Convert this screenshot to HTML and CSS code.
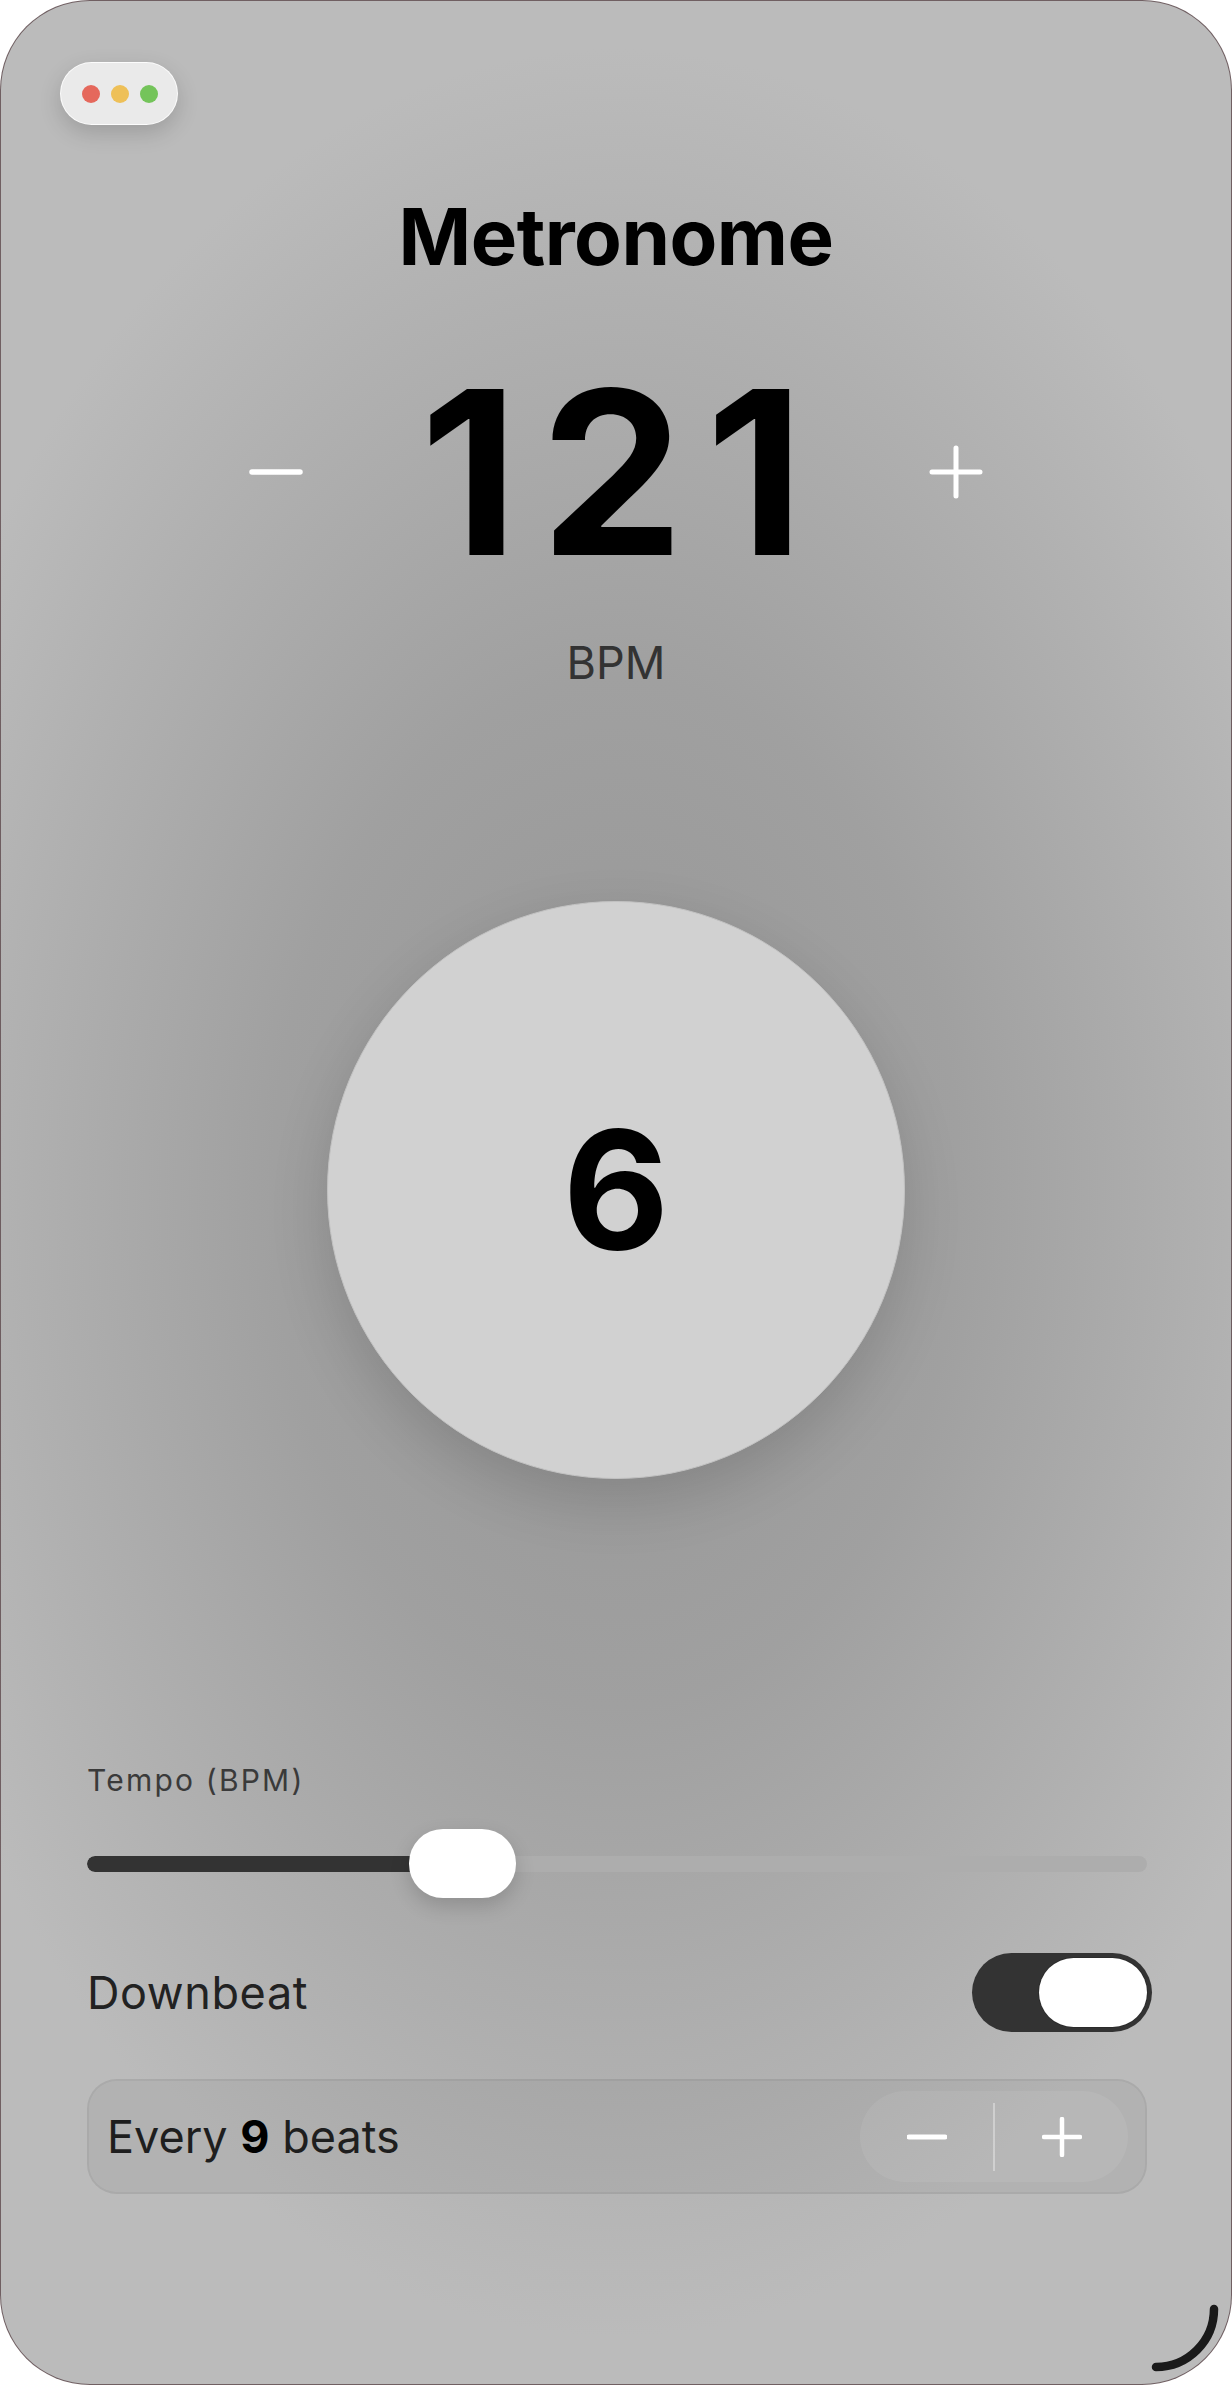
FILE: index.html
```html
<!DOCTYPE html>
<html lang="en">
<head>
<meta charset="utf-8">
<title>Metronome</title>
<link rel="stylesheet" href="styles.css">
</head>
<body>
<div class="window">
  <div class="traffic">
    <span class="dot red"></span>
    <span class="dot yellow"></span>
    <span class="dot green"></span>
  </div>

  <h1 class="title">Metronome</h1>

  <div class="bpm-row">
    <button class="icon-btn" aria-label="Decrease tempo">
      <svg width="54" height="54" viewBox="0 0 54 54"><path d="M3 27H51" stroke="#fff" stroke-width="5.5" stroke-linecap="round"/></svg>
    </button>
    <div class="bpm-value">121</div>
    <button class="icon-btn" aria-label="Increase tempo">
      <svg width="54" height="54" viewBox="0 0 54 54"><path d="M3 27H51M27 3V51" stroke="#fff" stroke-width="5" stroke-linecap="round"/></svg>
    </button>
  </div>
  <div class="bpm-label">BPM</div>

  <div class="beat-circle"><span class="beat-num">6</span></div>

  <div class="controls">
    <div class="slider-label">Tempo (BPM)</div>
    <div class="slider">
      <div class="track">
        <div class="fill" style="width: 35.5%"></div>
      </div>
      <div class="thumb" style="left: 30.4%"></div>
    </div>

    <div class="row">
      <span class="row-label">Downbeat</span>
      <div class="toggle on"><span class="knob"></span></div>
    </div>

    <div class="every-box">
      <span class="every-text">Every <b>9</b> beats</span>
      <div class="stepper">
        <button class="step" aria-label="Fewer beats">
          <svg width="40" height="40" viewBox="0 0 40 40"><path d="M2 20H38" stroke="#fff" stroke-width="5" stroke-linecap="round"/></svg>
        </button>
        <span class="divider"></span>
        <button class="step" aria-label="More beats">
          <svg width="40" height="40" viewBox="0 0 40 40"><path d="M2 20H38M20 2V38" stroke="#fff" stroke-width="4.5" stroke-linecap="round"/></svg>
        </button>
      </div>
    </div>
  </div>

  <svg class="resize" width="80" height="80" viewBox="0 0 80 80"><path d="M68 10A58 58 0 0 1 10 68" fill="none" stroke="#1a1a1a" stroke-width="8.5" stroke-linecap="round"/></svg>
</div>
</body>
</html>
```

FILE: styles.css
```css
* { box-sizing: border-box; }

html, body {
  margin: 0;
  padding: 0;
  background: #ffffff;
}

body {
  font-family: Inter, "Noto Sans", "Liberation Sans", sans-serif;
  width: 1232px;
  height: 2385px;
  overflow: hidden;
}

.window {
  position: relative;
  width: 1232px;
  height: 2385px;
  border-radius: 90px;
  border: 1.5px solid rgba(80, 55, 60, 0.7);
  overflow: hidden;
  background:
    radial-gradient(ellipse 62% 48% at 50% 50%, #959595 0%, #a0a0a0 45%, #b0b0b0 78%, #bbbbbb 100%);
  display: flex;
  flex-direction: column;
  align-items: center;
}

.traffic {
  align-self: flex-start;
  margin: 61px 0 0 59px;
  width: 118px;
  height: 63px;
  border-radius: 32px;
  background: #eaeaea;
  border: 1px solid rgba(255, 255, 255, 0.85);
  box-shadow: 0 8px 22px rgba(0, 0, 0, 0.16);
  display: flex;
  align-items: center;
  gap: 11px;
  padding-left: 21px;
}

.dot {
  width: 18px;
  height: 18px;
  border-radius: 50%;
}
.dot.red { background: #e5685c; }
.dot.yellow { background: #eec058; }
.dot.green { background: #74c45a; }

.title {
  margin: 73px 0 0;
  font-size: 78px;
  line-height: 1;
  font-weight: 700;
  color: #000;
  letter-spacing: -0.5px;
}

.bpm-row {
  margin-top: 82px;
  display: flex;
  align-items: center;
  justify-content: center;
}

.icon-btn {
  width: 80px;
  height: 80px;
  border: 0;
  padding: 0;
  background: transparent;
  display: flex;
  align-items: center;
  justify-content: center;
}

.bpm-value {
  width: 600px;
  text-align: center;
  font-size: 228px;
  line-height: 1;
  font-weight: 700;
  color: #000;
  letter-spacing: 22px;
  text-indent: 14px;
}

.bpm-label {
  margin-top: 54px;
  font-size: 45px;
  line-height: 1;
  color: #333;
}

.beat-circle {
  margin-top: 216px;
  width: 578px;
  height: 578px;
  border-radius: 50%;
  background: #d1d1d1;
  border: 1.5px solid #c2c2c2;
  box-shadow: 0 22px 60px rgba(0, 0, 0, 0.14);
  display: flex;
  align-items: center;
  justify-content: center;
}

.beat-num {
  font-size: 164px;
  line-height: 1;
  font-weight: 700;
  color: #000;
}

.controls {
  margin-top: 286px;
  width: 1232px;
  padding: 0 85px 0 87px;
  display: flex;
  flex-direction: column;
}

.slider-label {
  font-size: 30px;
  line-height: 1;
  color: #3a3a3a;
  letter-spacing: 2.2px;
}

.slider {
  position: relative;
  margin-top: 34px;
  height: 69px;
  display: flex;
  align-items: center;
}

.track {
  width: 100%;
  height: 16px;
  border-radius: 8px;
  background: #adadad;
  overflow: hidden;
}

.fill {
  height: 100%;
  background: #333333;
  border-radius: 8px;
}

.thumb {
  position: absolute;
  top: 0;
  width: 107px;
  height: 69px;
  border-radius: 34px;
  background: #ffffff;
  box-shadow: 0 8px 20px rgba(0, 0, 0, 0.16);
}

.row {
  margin-top: 55px;
  display: flex;
  align-items: center;
  justify-content: space-between;
  height: 79px;
}

.row-label {
  font-size: 45px;
  line-height: 1;
  color: #222;
  letter-spacing: 0.6px;
}

.toggle {
  width: 180px;
  height: 79px;
  margin-right: -5px;
  border-radius: 40px;
  background: #333333;
  padding: 5px;
  display: flex;
  justify-content: flex-end;
}

.knob {
  width: 108px;
  height: 69px;
  border-radius: 35px;
  background: #ffffff;
  box-shadow: 0 0 0 1px rgba(0, 0, 0, 0.15);
}

.every-box {
  margin-top: 47px;
  height: 115px;
  border-radius: 30px;
  background: rgba(0, 0, 0, 0.045);
  border: 2px solid rgba(0, 0, 0, 0.05);
  display: flex;
  align-items: center;
  justify-content: space-between;
  padding: 0 17px 0 18px;
}

.every-text {
  font-size: 45px;
  line-height: 1;
  color: #1e1e1e;
}

.every-text b {
  font-weight: 700;
  color: #000;
}

.stepper {
  width: 268px;
  height: 91px;
  border-radius: 46px;
  background: rgba(255, 255, 255, 0.07);
  display: flex;
  align-items: center;
}

.step {
  flex: 1;
  height: 100%;
  border: 0;
  padding: 0;
  background: transparent;
  display: flex;
  align-items: center;
  justify-content: center;
}

.divider {
  width: 2px;
  height: 68px;
  background: rgba(255, 255, 255, 0.35);
}

.resize {
  position: absolute;
  left: 1145px;
  top: 2298px;
}
```
